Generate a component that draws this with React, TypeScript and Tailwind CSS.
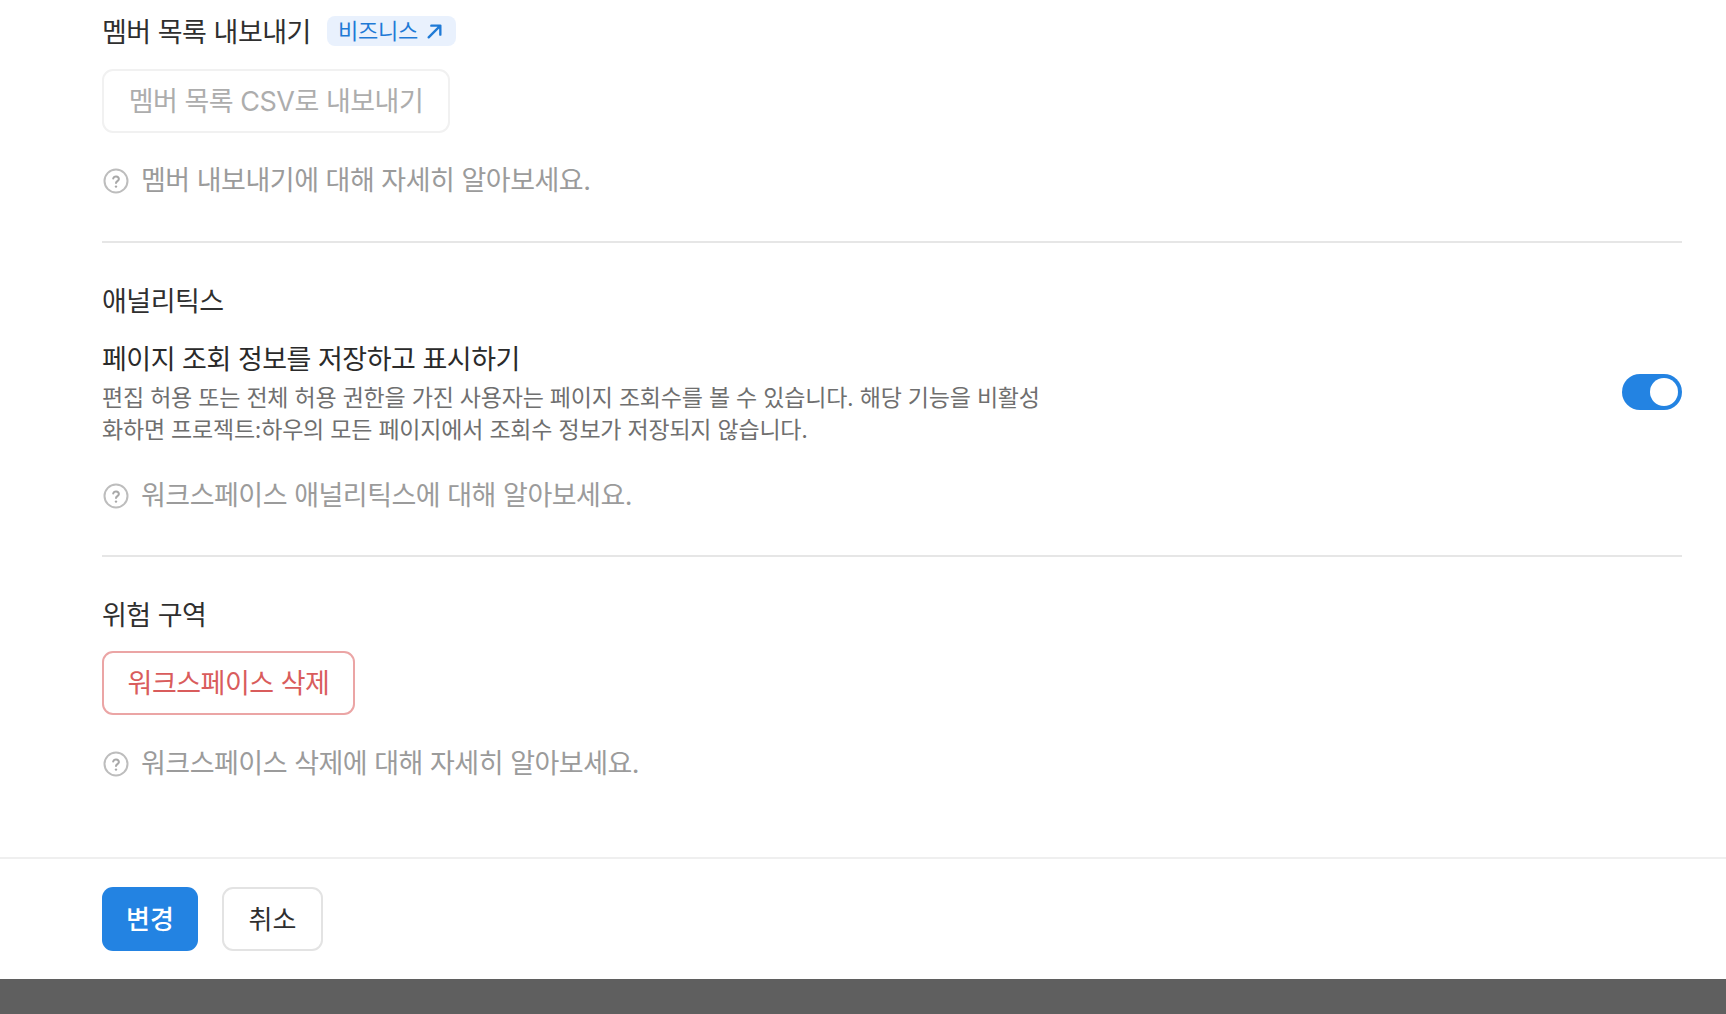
const font = "font-['Inter','Noto_Sans_CJK_KR',sans-serif]";

const HelpLink = ({ children }: { children: string }) => (
  <div className="flex items-center gap-[12px] text-[27px] leading-[40px] tracking-[-0.5px] text-[#9b9b9b]">
    <svg width="26" height="26" viewBox="0 0 26 26" fill="none" className="ml-[1px] shrink-0">
      <circle cx="13" cy="13" r="11.5" stroke="#bdbdbd" strokeWidth="2" />
      <path d="M10.2 10.6a2.9 2.9 0 0 1 5.7.4c0 2-2.9 2.2-2.9 4.1" stroke="#a8a8a8" strokeWidth="2" strokeLinecap="round" />
      <circle cx="13" cy="18.6" r="1.2" fill="#a8a8a8" />
    </svg>
    <span>{children}</span>
  </div>
);

const SectionTitle = ({ children }: { children: string }) => (
  <h2 className="text-[27px] leading-[38px] font-normal tracking-[-0.5px] text-[#2f2f2f]">{children}</h2>
);

export default function App() {
  return (
    <div className={`flex h-[1014px] w-full flex-col overflow-hidden bg-white ${font}`}>
      <div className="flex-1 pr-[44px] pl-[102px] pt-[14px]">
        <section className="border-b-2 border-[#e6e6e6] pb-[40px]">
          <div className="flex items-start gap-4">
            <SectionTitle>멤버 목록 내보내기</SectionTitle>
            <span className="mt-[2px] flex h-[30px] w-[129px] items-center justify-between rounded-lg bg-[#e9f1fd] pt-[1px] pr-[13px] pl-[11px] text-[22px] tracking-[-0.2px] text-[#1f7ad6]">
              비즈니스
              <svg width="17" height="17" viewBox="0 0 16 16" fill="none" stroke="#1f7ad6" strokeWidth="2.2" strokeLinecap="round" strokeLinejoin="round">
                <path d="M2.5 13.5 13.5 2.5M5 2.5h8.5V11" />
              </svg>
            </span>
          </div>
          <button type="button" className="mt-[17px] block h-[64px] w-[348px] rounded-[11px] border-2 border-[#f1f1f1] pt-[2px] text-[27px] tracking-[-0.5px] text-[#adadad]">
            멤버 목록 CSV로 내보내기
          </button>
          <div className="mt-[28px]">
            <HelpLink>멤버 내보내기에 대해 자세히 알아보세요.</HelpLink>
          </div>
        </section>

        <section className="border-b-2 border-[#e6e6e6] pt-[40px] pb-[39px]">
          <SectionTitle>애널리틱스</SectionTitle>
          <div className="mt-[21px] flex items-center justify-between">
            <div>
              <h3 className="text-[27px] leading-[36px] font-normal tracking-[-0.5px] text-[#2a2a2a]">페이지 조회 정보를 저장하고 표시하기</h3>
              <p className="mt-[4px] w-[945px] break-all text-[23px] leading-[32px] tracking-[-0.22px] text-[#6f6f6f]">
                편집 허용 또는 전체 허용 권한을 가진 사용자는 페이지 조회수를 볼 수 있습니다. 해당 기능을 비활성화하면 프로젝트:하우의 모든 페이지에서 조회수 정보가 저장되지 않습니다.
              </p>
            </div>
            <button type="button" aria-label="toggle" className="mb-[4px] flex h-[36px] w-[60px] items-center justify-end rounded-full bg-[#2383e2] pr-[4px]">
              <span className="h-[28px] w-[28px] rounded-full bg-white" />
            </button>
          </div>
          <div className="mt-[30px]">
            <HelpLink>워크스페이스 애널리틱스에 대해 알아보세요.</HelpLink>
          </div>
        </section>

        <section className="pt-[40px]">
          <SectionTitle>위험 구역</SectionTitle>
          <button type="button" className="mt-[16px] block h-[64px] w-[253px] rounded-[11px] border-2 border-[#eba5a5] pt-[2px] text-[27px] tracking-[-0.5px] text-[#d95c5c]">
            워크스페이스 삭제
          </button>
          <div className="mt-[29px]">
            <HelpLink>워크스페이스 삭제에 대해 자세히 알아보세요.</HelpLink>
          </div>
        </section>
      </div>

      <footer className="flex h-[122px] items-start gap-6 border-t-2 border-[#efefef] px-[102px] pt-[28px]">
        <button type="button" className="h-[64px] w-[96px] rounded-[11px] bg-[#2383e2] text-[26px] font-medium text-white">변경</button>
        <button type="button" className="h-[64px] w-[101px] rounded-[11px] border-2 border-[#e3e3e3] text-[26px] text-[#2f2f2f]">취소</button>
      </footer>
      <div className="h-[35px] shrink-0 bg-[#5f5f5f]" />
    </div>
  );
}
